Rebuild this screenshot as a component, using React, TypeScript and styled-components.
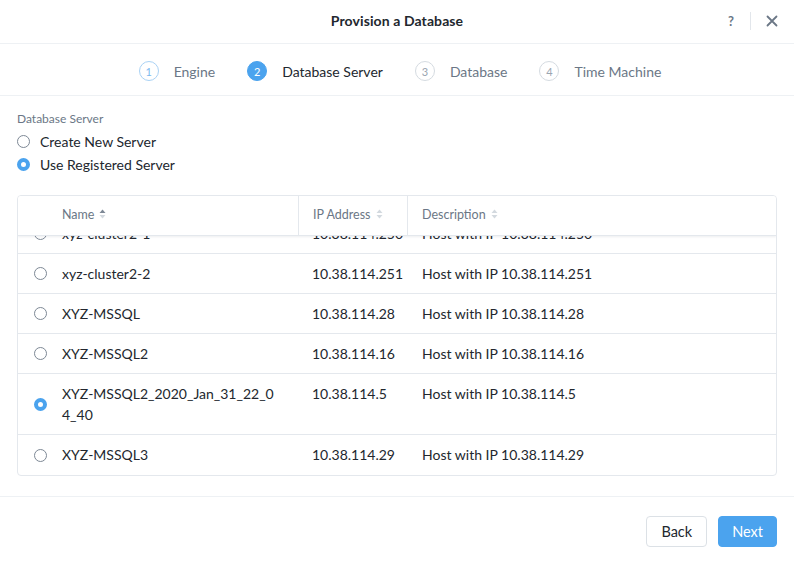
import React, { useEffect, useRef, useState } from "react";
import styled, { createGlobalStyle } from "styled-components";

const GlobalStyle = createGlobalStyle`
  html, body {
    margin: 0;
    padding: 0;
    background: #ffffff;
  }
  body {
    font-family: Lato, "Open Sans", "Liberation Sans", sans-serif;
    color: #22272e;
  }
`;

const BLUE = "#4ba3ee";
const BORDER = "#e4e8ed";

const STModal = styled.div`
  width: 794px;
  height: 565px;
  display: flex;
  flex-direction: column;
  background: #fff;
  overflow: hidden;
`;

const STHeader = styled.div`
  height: 44px;
  flex: none;
  display: grid;
  grid-template-columns: 1fr auto 1fr;
  align-items: center;
  border-bottom: 1px solid #eef1f4;
  box-sizing: border-box;
`;

const STTitle = styled.div`
  grid-column: 2;
  font-size: 14px;
  font-weight: 700;
  color: #22272e;
  letter-spacing: 0.1px;
  margin-top: -2px;
`;

const STHeaderTools = styled.div`
  grid-column: 3;
  justify-self: end;
  display: flex;
  align-items: center;
  padding-right: 16px;
  margin-top: -2px;
`;

const STHelp = styled.span`
  font-size: 13px;
  color: #6b7786;
  font-weight: 700;
  padding-right: 16px;
`;

const STToolDivider = styled.span`
  width: 1px;
  height: 18px;
  background: #e2e6eb;
  margin-right: 15px;
`;

const STStepper = styled.div`
  height: 52px;
  flex: none;
  display: flex;
  align-items: center;
  justify-content: center;
  gap: 32px;
  border-bottom: 1px solid #eef1f4;
  box-sizing: border-box;
  padding-top: 3px;
  padding-left: 6px;
`;

const STStep = styled.div`
  display: flex;
  align-items: center;
  gap: 15px;
`;

const STStepNum = styled.span<{ $active?: boolean; $done?: boolean }>`
  width: 20px;
  height: 20px;
  box-sizing: border-box;
  border-radius: 50%;
  display: flex;
  align-items: center;
  justify-content: center;
  font-size: 11px;
  background: ${(p) => (p.$active ? BLUE : "#fff")};
  color: ${(p) => (p.$active ? "#fff" : p.$done ? "#7cb9ef" : "#9aa5b1")};
  border: 1px solid
    ${(p) => (p.$active ? BLUE : p.$done ? "#a9d2f5" : "#d5dbe1")};
`;

const STStepLabel = styled.span<{ $active?: boolean }>`
  font-size: 14px;
  color: ${(p) => (p.$active ? "#22272e" : "#6b7786")};
`;

const STBody = styled.div`
  flex: 1;
  padding: 15px 17px 0 17px;
  display: flex;
  flex-direction: column;
`;

const STFieldLabel = styled.div`
  font-size: 12px;
  color: #6b7786;
  margin-bottom: 4px;
`;

const STRadioRow = styled.label`
  display: flex;
  align-items: center;
  gap: 10px;
  font-size: 14px;
  color: #22272e;
  height: 23px;
`;

const STRadio = styled.span<{ $checked?: boolean }>`
  width: 13px;
  height: 13px;
  border-radius: 50%;
  flex: none;
  box-sizing: border-box;
  border: ${(p) => (p.$checked ? `4px solid ${BLUE}` : "1px solid #7d8895")};
  background: #fff;
`;

const STTable = styled.div`
  margin-top: 19px;
  border: 1px solid ${BORDER};
  border-radius: 4px;
  display: flex;
  flex-direction: column;
  height: 281px;
  box-sizing: border-box;
  overflow: hidden;
`;

const COLS = "44px 236px 109px 1fr";

const STHeadRow = styled.div`
  display: grid;
  grid-template-columns: ${COLS};
  height: 40px;
  flex: none;
  border-bottom: 1px solid ${BORDER};
  box-shadow: 0 1px 2px rgba(30, 40, 60, 0.08);
  position: relative;
  z-index: 1;
  background: #fff;
  box-sizing: border-box;
`;

const STHeadCell = styled.div<{ $divider?: boolean }>`
  display: flex;
  align-items: center;
  gap: 5px;
  font-size: 12.5px;
  color: #6b7786;
  padding-bottom: 3px;
  padding-left: ${(p) => (p.$divider ? "14px" : "0")};
  border-left: ${(p) => (p.$divider ? `1px solid ${BORDER}` : "none")};
`;

const STScroll = styled.div`
  flex: 1;
  overflow: hidden;
`;

const STRow = styled.div`
  display: grid;
  grid-template-columns: ${COLS};
  border-bottom: 1px solid ${BORDER};
  min-height: 40px;
  box-sizing: border-box;
  &:last-child {
    border-bottom: none;
  }
`;

const STCell = styled.div<{ $pad?: number; $wrap?: boolean }>`
  font-size: 14px;
  color: #22272e;
  line-height: 21px;
  padding: 9px 0 9px ${(p) => p.$pad ?? 0}px;
  padding-right: ${(p) => (p.$wrap ? "18px" : "0")};
  word-break: ${(p) => (p.$wrap ? "break-all" : "normal")};
  white-space: ${(p) => (p.$wrap ? "normal" : "nowrap")};
`;

const STRadioCell = styled.div`
  display: flex;
  align-items: center;
  padding-left: 16px;
`;

const STFooter = styled.div`
  height: 68px;
  flex: none;
  margin-top: 18px;
  border-top: 1px solid #eef1f4;
  display: flex;
  align-items: center;
  justify-content: flex-end;
  gap: 11px;
  padding-right: 17px;
`;

const STButton = styled.button<{ $primary?: boolean }>`
  height: 31px;
  padding: 0 ${(p) => (p.$primary ? "13px" : "14px")};
  border-radius: 4px;
  font-family: inherit;
  font-size: 14.5px;
  background: ${(p) => (p.$primary ? BLUE : "#fff")};
  color: ${(p) => (p.$primary ? "#fff" : "#22272e")};
  border: 1px solid ${(p) => (p.$primary ? BLUE : "#dce1e6")};
  cursor: pointer;
  margin-top: 1px;
`;

const SortIcon = ({ up }: { up?: boolean }) => (
  <svg width="7" height="10" viewBox="0 0 7 10">
    <path d="M3.5 0.5 L6.5 4 L0.5 4 Z" fill={up ? "#7d8895" : "#d3d9df"} />
    <path d="M3.5 9.5 L6.5 6 L0.5 6 Z" fill="#d3d9df" />
  </svg>
);

const CloseIcon = () => (
  <svg width="12" height="12" viewBox="0 0 12 12">
    <path
      d="M1.5 1.5 L10.5 10.5 M10.5 1.5 L1.5 10.5"
      stroke="#6b7786"
      strokeWidth="1.8"
      strokeLinecap="round"
    />
  </svg>
);

type Server = { name: string; ip: string };

const SERVERS: Server[] = [
  { name: "xyz-cluster2-1", ip: "10.38.114.250" },
  { name: "xyz-cluster2-2", ip: "10.38.114.251" },
  { name: "XYZ-MSSQL", ip: "10.38.114.28" },
  { name: "XYZ-MSSQL2", ip: "10.38.114.16" },
  { name: "XYZ-MSSQL2_2020_Jan_31_22_04_40", ip: "10.38.114.5" },
  { name: "XYZ-MSSQL3", ip: "10.38.114.29" },
];

const STEPS = ["Engine", "Database Server", "Database", "Time Machine"];

export default function App() {
  const scrollRef = useRef<HTMLDivElement>(null);
  const [selected] = useState<number>(4);

  useEffect(() => {
    if (scrollRef.current) scrollRef.current.scrollTop = 22;
  }, []);

  return (
    <>
      <GlobalStyle />
      <STModal>
        <STHeader>
          <STTitle>Provision a Database</STTitle>
          <STHeaderTools>
            <STHelp>?</STHelp>
            <STToolDivider />
            <CloseIcon />
          </STHeaderTools>
        </STHeader>

        <STStepper>
          {STEPS.map((label, i) => (
            <STStep key={label}>
              <STStepNum $active={i === 1} $done={i === 0}>
                {i + 1}
              </STStepNum>
              <STStepLabel $active={i === 1}>{label}</STStepLabel>
            </STStep>
          ))}
        </STStepper>

        <STBody>
          <STFieldLabel>Database Server</STFieldLabel>
          <STRadioRow>
            <STRadio />
            Create New Server
          </STRadioRow>
          <STRadioRow>
            <STRadio $checked />
            Use Registered Server
          </STRadioRow>

          <STTable>
            <STHeadRow>
              <STHeadCell />
              <STHeadCell>
                Name <SortIcon up />
              </STHeadCell>
              <STHeadCell $divider>
                IP Address <SortIcon />
              </STHeadCell>
              <STHeadCell $divider>
                Description <SortIcon />
              </STHeadCell>
            </STHeadRow>
            <STScroll ref={scrollRef}>
              {SERVERS.map((s, i) => (
                <STRow key={s.name}>
                  <STRadioCell>
                    <STRadio $checked={i === selected} />
                  </STRadioCell>
                  <STCell $wrap>{s.name}</STCell>
                  <STCell $pad={14}>{s.ip}</STCell>
                  <STCell $pad={15}>Host with IP {s.ip}</STCell>
                </STRow>
              ))}
            </STScroll>
          </STTable>
        </STBody>

        <STFooter>
          <STButton>Back</STButton>
          <STButton $primary>Next</STButton>
        </STFooter>
      </STModal>
    </>
  );
}
